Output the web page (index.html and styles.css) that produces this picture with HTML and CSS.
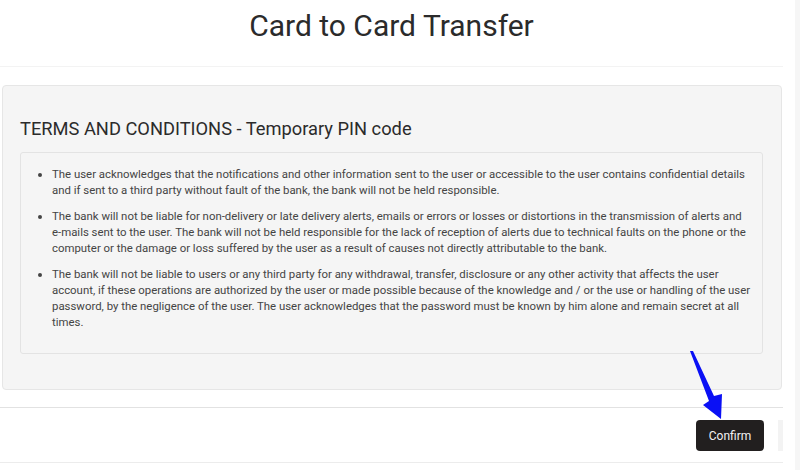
FILE: index.html
```html
<!DOCTYPE html>
<html lang="en">
<head>
<meta charset="utf-8">
<title>Card to Card Transfer</title>
<link rel="stylesheet" href="styles.css">
</head>
<body>
<div class="page">
  <main class="content">
    <h1 class="title">Card to Card Transfer</h1>
    <hr class="rule">
    <section class="panel">
      <h2 class="panel-title">TERMS AND CONDITIONS - Temporary PIN code</h2>
      <div class="terms">
        <ul class="terms-list">
          <li>The user acknowledges that the notifications and other information sent to the user or accessible to the user contains confidential details and if sent to a third party without fault of the bank, the bank will not be held responsible.</li>
          <li>The bank will not be liable for non-delivery or late delivery alerts, emails or errors or losses or distortions in the transmission of alerts and <span class="nowrap">e-mails</span> sent to the user. The bank will not be held responsible for the lack of reception of alerts due to technical faults on the phone or the computer or the damage or loss suffered by the user as a result of causes not directly attributable to the bank.</li>
          <li>The bank will not be liable to users or any third party for any withdrawal, transfer, disclosure or any other activity that affects the user account, if these operations are authorized by the user or made possible because of the knowledge and / or the use or handling of the user password, by the negligence of the user. The user acknowledges that the password must be known by him alone and remain secret at all times.</li>
        </ul>
      </div>
    </section>
    <hr class="rule rule-footer">
    <div class="actions">
      <button class="btn-confirm" type="button">Confirm</button>
      <span class="actions-edge"></span>
    </div>
    <hr class="rule">
  </main>
  <div class="scroll-track"></div>
  <svg class="pointer" width="40" height="75" viewBox="0 0 40 75" aria-hidden="true">
    <polygon points="0,0 3,0 24,45 32,43 31,68 13,54 19,50" fill="#0a10f5"/>
  </svg>
</div>
</body>
</html>
```
FILE: styles.css
```css
html, body {
  margin: 0;
  padding: 0;
  background: #fff;
}

body {
  font-family: Roboto, "Liberation Sans", Arial, sans-serif;
  color: #333;
}

.page {
  position: relative;
  display: flex;
  width: 800px;
  height: 470px;
  overflow: hidden;
}

.content {
  width: 783px;
  display: flex;
  flex-direction: column;
}

.title {
  margin: 8px 0 0;
  font-size: 30px;
  font-weight: 400;
  line-height: 36px;
  text-align: center;
  color: #2b2b2b;
}

.rule {
  margin: 0;
  border: 0;
  border-top: 1px solid #ececec;
  height: 0;
}

.content > .rule:first-of-type {
  margin-top: 22px;
  border-top-color: #f3f3f3;
}

.panel {
  margin: 18px 1px 0 2px;
  background: #f5f5f5;
  border: 1px solid #e6e6e6;
  border-radius: 4px;
  padding: 32px 18px 35px 17px;
}

.panel-title {
  margin: 0 0 12px;
  font-size: 18.3px;
  font-weight: 400;
  line-height: 22px;
  color: #2b2b2b;
}

.terms {
  border: 1px solid #e3e3e3;
  border-radius: 3px;
  background: #f5f5f5;
  padding: 13px 6px 23px 0;
}

.terms-list {
  margin: 0;
  padding-left: 31px;
  font-size: 11.4px;
  line-height: 16px;
  color: #444;
}

.terms-list li + li {
  margin-top: 10px;
}

.nowrap {
  white-space: nowrap;
}

.rule-footer {
  margin-top: 17px;
  border-top-color: #e2e2e2;
}

.actions {
  display: flex;
  justify-content: flex-end;
  align-items: center;
  gap: 14px;
  padding: 12px 0 11px;
}

.btn-confirm {
  width: 68px;
  height: 31px;
  border: 0;
  border-radius: 4px;
  background: #221f1f;
  color: #f2f2f2;
  font-family: Roboto, "Liberation Sans", Arial, sans-serif;
  font-size: 12px;
  padding: 0;
}

.actions-edge {
  width: 5px;
  height: 31px;
  background: #f3f3f3;
}

.scroll-track {
  margin-left: 12px;
  width: 5px;
  background: #f6f6f6;
}

.pointer {
  position: absolute;
  left: 690px;
  top: 351px;
}
```
